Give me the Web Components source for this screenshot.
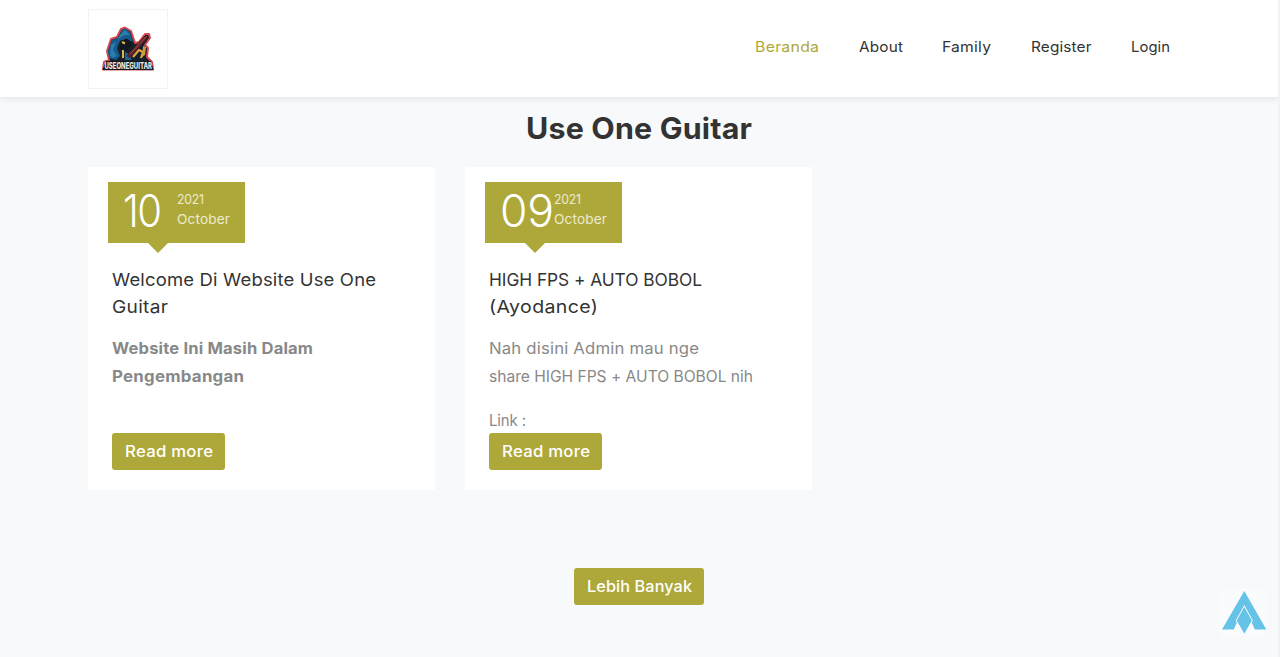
<!DOCTYPE html>
<html lang="id">
<head>
<meta charset="utf-8">
<title>Use One Guitar</title>
<style>
html,body{margin:0;height:100%;overflow:hidden}
body{background:#f8f9fb;font-family:Inter,"Open Sans",sans-serif;color:#333}
</style>
</head>
<body>
<guitar-page></guitar-page>
<script>
const define = (name, html, ready) => customElements.define(name, class extends HTMLElement {
  constructor() {
    super();
    const t = document.createElement('template');
    t.innerHTML = html;
    this.attachShadow({mode: 'open'}).append(t.content.cloneNode(true));
  }
  connectedCallback() { if (ready) ready(this); }
});

// A single line of text widened to the width given in "w": partly by glyph stretch, the rest by tracking.
define('text-line', `<style>
:host{display:block;white-space:nowrap;text-align:left}
span{display:inline-block;transform-origin:0 50%}
</style><span><slot></slot></span>`, el => {
  const w = parseFloat(el.getAttribute('w'));
  const span = el.shadowRoot.querySelector('span');
  const n = el.textContent.length;
  const natural = span.getBoundingClientRect().width;
  const stretch = 1 + (w / natural - 1) * 0.75;
  el.style.width = w + 'px';
  span.style.letterSpacing = (w / stretch - natural) / (n - 1) + 'px';
  span.style.transform = 'scaleX(' + stretch + ')';
});

define('site-logo', `<style>
:host{display:block;box-sizing:border-box;width:80px;height:80px;border:1px solid #f3f3f3;background:#fff}
svg{display:block;width:78px;height:78px;overflow:visible}
text{font:800 5.7px Inter,sans-serif}
</style>
<svg viewBox="89 10 78 78">
<g stroke-linejoin="round">
<path d="M104 62 L109 60 L107 51 L111 39 L117 37 L121 29 L125 27.500 L131 31 L135 43 L139 42 L145 34 L149 34 L150 38 L145 45 L148 48 L147 57 L152 62 L153 69.500 L103 69.500Z" fill="#15202b" stroke="#d5484f" stroke-width="2"/>
<path d="M109 58 L108 51 L112 40 L118 38 L122 30 L125 28.500 L130 32 L133 42 L127 39 L120 41 L117 48 L120 56 L116 60Z" fill="#175a8c"/>
<path d="M120 35 L125 30 L130 35 L124 35 L117 40Z" fill="#2c7eae"/>
<path d="M111 45 L116 42 L113 50 L117 56 L112 58 L110 55Z" fill="#2f7dae"/>
<path d="M120 41 L127 38.500 L132 44 L127 51 L120 50Z" fill="#101820"/>
<path d="M122 42 L125 43.500 M123 50 L123 58" stroke="#dcb648" stroke-width="2"/>
<path d="M125 52 L131 55 L131 60 L125 60Z" fill="#1d638b"/>
<path d="M133 57 L139 50 L143 52 L141 58" fill="none" stroke="#dda43d" stroke-width="2.200"/>
<path d="M128 57 L146 37" stroke="#5c2028" stroke-width="4"/>
<path d="M130 54 L147 36" stroke="#a3544e" stroke-width="1"/>
<path d="M143 46 L146 47 L145 55 L142 57Z" fill="#d29b3b"/>
</g>
<path d="M106 61 L151 61 L153.500 70 L102.500 70Z" fill="#171a1d"/>
<text transform="translate(104.500 68.500) scale(1 1.450)" textLength="47.500" lengthAdjust="spacingAndGlyphs" fill="#ececec">USEONEGUITAR</text>
</svg>`);

define('nav-link', `<style>
:host{display:block;font-size:14.6px;line-height:22px;color:#333}
:host([active]){color:#aea83a}
</style><slot></slot>`);

define('site-header', `<style>
:host{display:flex;box-sizing:border-box;height:97px;padding:9px 110px 8px 88px;justify-content:space-between;background:#fff;box-shadow:0 1px 8px rgba(0,0,0,.1);position:relative}
nav{display:flex;gap:39.6px;padding-top:27px}
</style>
<site-logo></site-logo>
<nav>
<nav-link active><text-line w="64">Beranda</text-line></nav-link>
<nav-link><text-line w="44">About</text-line></nav-link>
<nav-link><text-line w="49">Family</text-line></nav-link>
<nav-link><text-line w="60.5">Register</text-line></nav-link>
<nav-link><text-line w="39">Login</text-line></nav-link>
</nav>`);

define('olive-button', `<style>
:host{display:block;width:fit-content}
button{display:block;border:0;border-radius:3px;height:37px;padding:0 12.5px;background:#aea83a;color:#fff;font:500 15.6px/37px Inter,sans-serif}
</style><button><slot></slot></button>`);

define('date-badge', `<style>
:host{display:flex;box-sizing:border-box;position:relative;width:137px;height:61px;margin-left:20px;padding:0 15px;justify-content:space-between;background:#aea83a;color:#fff}
:host::after{content:"";position:absolute;left:39.5px;top:61px;border:10px solid transparent;border-top-color:#aea83a;border-bottom:0}
.day{font-size:45px;font-weight:300;line-height:58px}
.rest{font-size:13px;line-height:20px;padding-top:7px;color:#edebcf}
</style><div class="day"><slot name="day"></slot></div><div class="rest"><slot></slot></div>`);

define('post-card', `<style>
:host{display:flex;flex-direction:column;box-sizing:border-box;width:347px;height:323px;padding-top:15px;background:#fff}
.inner{display:flex;flex-direction:column;padding-left:24px}
.title{margin-top:23px;font-size:17.6px;line-height:27px;color:#333}
.body{height:98px;margin-top:15px;font-size:15.7px;line-height:28px;color:#888}
</style>
<slot name="date"></slot>
<div class="inner"><div class="title"><slot name="title"></slot></div><div class="body"><slot></slot></div>
<olive-button><text-line w="88">Read more</text-line></olive-button></div>`);

define('back-to-top', `<style>
:host{display:block;position:absolute;left:1220px;top:589px;width:47px;height:47px;background:#fafbfc}
svg{display:block}
</style><svg width="47" height="47" viewBox="1220 589 47 47"><path d="M1244.3 591 L1266.3 629.500 H1254.800 L1244.3 605 L1233.800 629.500 H1222Z" fill="#65c3e8"/><path d="M1244.3 607 L1251.800 620.500 L1244.3 633.800 L1236.700 620.500Z" fill="#65c3e8" stroke="#fafbfc" stroke-width="1.800" paint-order="stroke"/></svg>`);

define('guitar-page', `<style>
:host{display:block;position:relative;width:1280px;height:657px;overflow:hidden;background:#f8f9fb}
.edge{position:absolute;right:0;top:0;width:2px;height:657px;background:#f1f2f3}
h1{display:flex;justify-content:center;margin:13px 2px 0 0;font-size:29.4px;line-height:38px;font-weight:700;color:#333}
main{display:flex;gap:30px;margin:19px 0 0 88px}
.more{display:flex;justify-content:center;margin:78px 2px 0 0}
p{margin:0 0 16px}
</style>
<site-header></site-header>
<h1><text-line w="226">Use One Guitar</text-line></h1>
<main>
<post-card>
<date-badge slot="date"><text-line slot="day" w="39">10</text-line><text-line w="27">2021</text-line><text-line w="53">October</text-line></date-badge>
<text-line slot="title" w="264">Welcome Di Website Use One</text-line>
<text-line slot="title" w="56">Guitar</text-line>
<b><text-line w="201">Website Ini Masih Dalam</text-line><text-line w="132">Pengembangan</text-line></b>
</post-card>
<post-card>
<date-badge slot="date"><text-line slot="day" w="54">09</text-line><text-line w="27">2021</text-line><text-line w="53">October</text-line></date-badge>
<text-line slot="title" w="213">HIGH FPS + AUTO BOBOL</text-line>
<text-line slot="title" w="109">(Ayodance)</text-line>
<p><text-line w="210">Nah disini Admin mau nge</text-line><text-line w="264">share HIGH FPS + AUTO BOBOL nih</text-line></p>
<text-line w="37">Link :</text-line>
</post-card>
</main>
<div class="more"><olive-button><text-line w="105">Lebih Banyak</text-line></olive-button></div>
<back-to-top></back-to-top>
<div class="edge"></div>`);
</script>
</body>
</html>
